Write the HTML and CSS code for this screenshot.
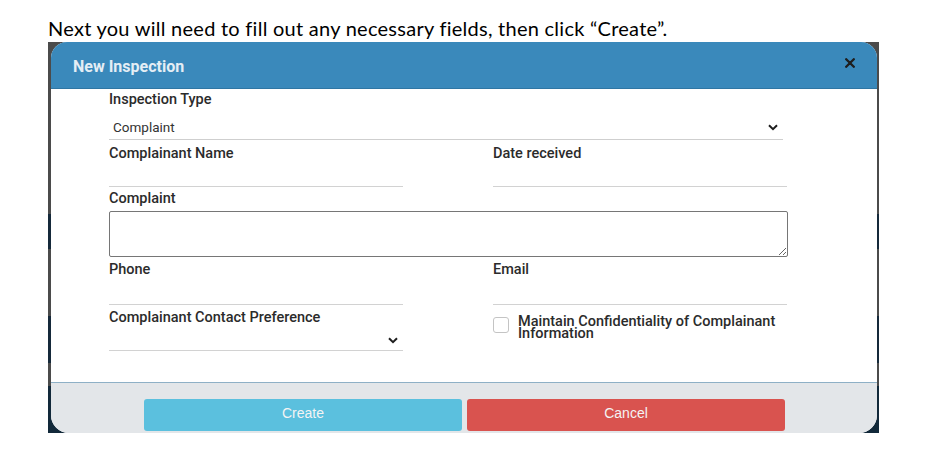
FILE: index.html
```html
<!DOCTYPE html>
<html>
<head>
<meta charset="utf-8">
<link rel="stylesheet" href="styles.css">
</head>
<body>
<p class="caption">Next you will need to fill out any necessary fields, then click “Create”.</p>
<div class="shot">
  <div class="modal">
    <div class="modal-header">
      <span class="title">New Inspection</span>
      <svg class="close" width="10" height="10" viewBox="0 0 10 10"><path d="M1.2 1.2 L8.8 8.8 M8.8 1.2 L1.2 8.8" stroke="#1e1e1e" stroke-width="2.3" stroke-linecap="round"/></svg>
    </div>
    <div class="modal-body">
      <div class="label">Inspection Type</div>
      <div class="select select-main">
        <span class="select-text">Complaint</span>
        <svg class="chev" width="10" height="7" viewBox="0 0 10 7"><path d="M1 1.2 L5 5.2 L9 1.2" fill="none" stroke="#1e1e1e" stroke-width="2"/></svg>
      </div>
      <div class="row row-name">
        <div class="field">
          <div class="label">Complainant Name</div>
          <div class="line line-name"></div>
        </div>
        <div class="field">
          <div class="label">Date received</div>
          <div class="line line-name"></div>
        </div>
      </div>
      <div class="label label-complaint">Complaint</div>
      <textarea class="textarea"></textarea>
      <div class="row row-phone">
        <div class="field">
          <div class="label">Phone</div>
          <div class="line line-phone"></div>
        </div>
        <div class="field">
          <div class="label">Email</div>
          <div class="line line-phone"></div>
        </div>
      </div>
      <div class="row row-pref">
        <div class="field">
          <div class="label">Complainant Contact Preference</div>
          <div class="line line-pref">
            <svg class="chev" width="10" height="7" viewBox="0 0 10 7"><path d="M1 1.2 L5 5.2 L9 1.2" fill="none" stroke="#1e1e1e" stroke-width="2"/></svg>
          </div>
        </div>
        <div class="check-field">
          <div class="checkbox"></div>
          <div class="check-label">Maintain Confidentiality of Complainant Information</div>
        </div>
      </div>
    </div>
    <div class="modal-footer">
      <div class="btn btn-create">Create</div>
      <div class="btn btn-cancel">Cancel</div>
    </div>
  </div>
</div>
</body>
</html>
```
FILE: styles.css
```css
html, body {
  margin: 0;
  padding: 0;
  background: #ffffff;
}

.caption {
  margin: 0;
  padding: 16px 0 0 48px;
  height: 24px;
  font-family: Lato, "Liberation Sans", sans-serif;
  font-size: 20px;
  letter-spacing: 0.26px;
  font-variant-ligatures: none;
  line-height: 24px;
  color: #000;
  white-space: nowrap;
}

.shot {
  margin: 2px 0 0 48px;
  width: 831px;
  height: 391px;
  box-sizing: border-box;
  padding: 0 2px 0 3px;
  display: flex;
  background: linear-gradient(to bottom,
    #4b4b4b 0, #4b4b4b 44%,
    #15293a 44%, #15293a 53%,
    #4b4b4b 53%, #4b4b4b 70%,
    #15293a 70%, #15293a 82%,
    #4b4b4b 82%, #4b4b4b 88%,
    #12293a 88%, #12293a 100%);
}

.modal {
  flex: 1;
  display: flex;
  flex-direction: column;
  background: #fff;
  border-radius: 16px 16px 18px 18px;
  overflow: hidden;
  font-family: Roboto, "Liberation Sans", sans-serif;
}

.modal-header {
  height: 46px;
  border-bottom: 1px solid #2f76a3;
  background: #3a89bb;
  display: flex;
  align-items: center;
  justify-content: space-between;
  padding: 0 22px 0 22px;
  flex: none;
}

.title {
  font-family: Roboto, "Liberation Sans", sans-serif;
  font-weight: 700;
  font-size: 16px;
  color: #e4eef5;
  position: relative;
  top: 1px;
}

.close {
  display: block;
  margin-top: -5px;
}

.modal-body {
  flex: 1;
  padding: 2px 89px 0 58px;
}

.label {
  height: 18px;
  font-size: 14.5px;
  line-height: 18px;
  font-weight: 500;
  color: #2b2b2b;
  white-space: nowrap;
}

.select {
  display: flex;
  align-items: center;
  justify-content: space-between;
  box-sizing: border-box;
  border-bottom: 1px solid #cfcfcf;
}

.select-main {
  height: 31px;
  margin-right: 5px;
  padding: 6px 5px 0 4px;
}

.select-text {
  font-size: 13.5px;
  color: #333;
}

.chev {
  display: block;
}

.row {
  display: grid;
  grid-template-columns: 294px 294px;
  column-gap: 90px;
}

.row-name {
  margin-top: 5px;
}

.line {
  box-sizing: border-box;
  border-bottom: 1px solid #d2d2d2;
}

.line-name {
  height: 24px;
}

.label-complaint {
  margin-top: 3px;
}

.textarea {
  display: block;
  margin: 3px 0 0 0;
  width: 679px;
  height: 46px;
  box-sizing: border-box;
  border: 1px solid #767676;
  border-radius: 2px;
  padding: 0;
  background: #fff;
}

.row-phone {
  margin-top: 4px;
}

.line-phone {
  height: 26px;
}

.row-pref {
  margin-top: 4px;
}

.line-pref {
  height: 24px;
  display: flex;
  justify-content: flex-end;
  align-items: center;
  padding: 3px 5px 0 0;
}

.check-field {
  display: flex;
  align-items: flex-start;
  gap: 9px;
  padding-top: 8px;
}

.checkbox {
  width: 16px;
  height: 16px;
  box-sizing: border-box;
  border: 1px solid #c4c4c4;
  border-radius: 3px;
  flex: none;
}

.check-label {
  font-size: 14.5px;
  line-height: 12px;
  font-weight: 500;
  color: #2b2b2b;
  margin-top: -1px;
}

.modal-footer {
  flex: none;
  height: 51px;
  box-sizing: border-box;
  border-top: 1px solid #8eb0c6;
  background: #e3e6e9;
  padding: 16px 92px 0 93px;
  display: flex;
  gap: 5px;
}

.btn {
  flex: 1;
  height: 32px;
  box-sizing: border-box;
  padding-bottom: 4px;
  border-radius: 3px;
  display: flex;
  align-items: center;
  justify-content: center;
  font-family: "Liberation Sans", Arial, sans-serif;
  font-size: 14px;
  color: #f4f4f4;
}

.btn-create {
  background: #5bc0de;
}

.btn-cancel {
  background: #d9534f;
}
```
